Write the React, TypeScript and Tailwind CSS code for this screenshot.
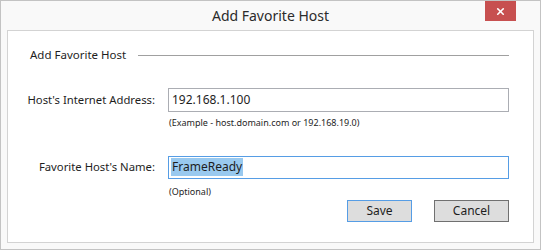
import { X } from "lucide-react";

const font = { fontFamily: '"Segoe UI", "Noto Sans", "Open Sans", sans-serif' };

const App = () => {
  return (
    <div
      className="w-[541px] h-[250px] border border-[#c3c3c3] bg-[#f9f9f9] relative flex flex-col text-[#1e1e1e]"
      style={font}
    >
      {/* title bar */}
      <div className="h-[29px] flex items-center justify-center text-[14px] text-[#2b2b2b]">
        Add Favorite Host
      </div>
      <div className="absolute top-0 right-[24px] w-[31px] h-[20px] bg-[#c75050] flex items-center justify-center">
        <X size={11} strokeWidth={3.5} color="#ffffff" />
      </div>

      {/* body panel */}
      <div className="ml-[6px] w-[527px] h-[213px] bg-white border border-[#d3d3d3] pl-[22px] pr-[24px] flex flex-col">
        <div className="flex items-center gap-[12px] mt-[16px] h-[16px]">
          <span className="text-[11.5px] whitespace-nowrap">Add Favorite Host</span>
          <div className="flex-1 h-px bg-[#a0a0a0]" />
        </div>

        <div className="flex items-center mt-[25px]">
          <div className="w-[138px] pr-[13px] flex justify-end text-[11.3px] whitespace-nowrap">
            Host's Internet Address:
          </div>
          <div className="flex-1 h-[24px] border border-[#abadb3] flex items-center px-[3px] text-[12px]">
            192.168.1.100
          </div>
        </div>
        <div className="ml-[139px] mt-[4px] text-[9px] text-[#1e1e1e]">
          (Example - host.domain.com or 192.168.19.0)
        </div>

        <div className="flex items-center mt-[26px]">
          <div className="w-[138px] pr-[13px] flex justify-end text-[11.3px] whitespace-nowrap">
            Favorite Host's Name:
          </div>
          <div className="flex-1 h-[23px] border border-[#569de5] flex items-center px-[2px] text-[12px]">
            <span className="bg-[#99c9ef] px-[1px]">FrameReady</span>
          </div>
        </div>
        <div className="ml-[139px] mt-[6px] text-[9px]">(Optional)</div>

        <div className="flex justify-end gap-[22px] mt-[2px]">
          <button className="w-[65px] h-[22px] bg-[#dddddd] border border-[#569de5] text-[12px]">
            Save
          </button>
          <button className="w-[75px] h-[22px] bg-[#dddddd] border border-[#707070] text-[12px]">
            Cancel
          </button>
        </div>
      </div>
    </div>
  );
};

export default App;
